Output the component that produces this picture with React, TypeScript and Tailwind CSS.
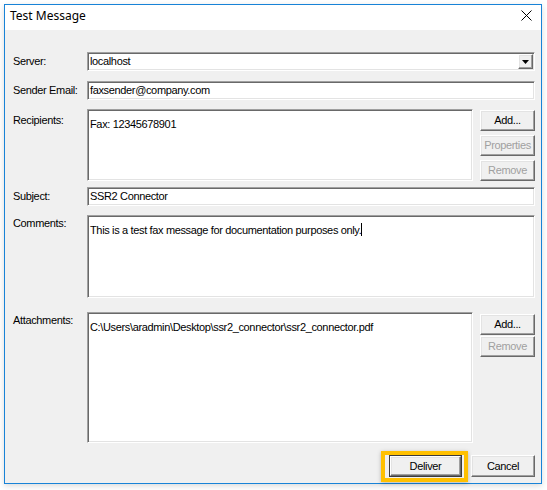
import React from "react";

const sunken =
  "bg-white border border-t-[#a0a0a0] border-l-[#a0a0a0] border-r-white border-b-white shadow-[inset_1px_1px_0_#696969,inset_-1px_-1px_0_#e3e3e3]";

const raised =
  "bg-[#f0f0f0] border border-t-white border-l-white border-r-[#696969] border-b-[#696969] shadow-[inset_-1px_-1px_0_#a0a0a0,inset_1px_1px_0_#e3e3e3]";

const txt = "text-[11px] tracking-[-0.35px]";

const Btn: React.FC<{ label: string; disabled?: boolean; className?: string }> = ({
  label,
  disabled,
  className = "",
}) => (
  <div
    className={`${raised} flex items-center justify-center ${txt} leading-none ${
      disabled ? "text-[#a0a0a0]" : "text-black"
    } ${className}`}
  >
    {label}
  </div>
);

const Label: React.FC<{ text: string; className?: string }> = ({ text, className = "" }) => (
  <div className={`w-[74px] shrink-0 ${txt} text-black ${className}`}>{text}</div>
);

export default function App() {
  return (
    <div
      className="w-[547px] h-[490px] bg-white pt-[4px] pl-[4px]"
      style={{ fontFamily: '"Liberation Sans", Arial, sans-serif' }}
    >
      <div className="w-[538px] h-[480px] border border-[#1883d7] flex flex-col shadow-[0_2px_6px_rgba(0,0,0,0.15)]">
        {/* Title bar */}
        <div className="h-[25px] bg-white flex items-center justify-between pl-[5px] pr-[5px] pb-[4px]">
          <span
            className="text-[12px] text-black"
            style={{ fontFamily: '"Noto Sans", "Open Sans", sans-serif' }}
          >
            Test Message
          </span>
          <svg width="11" height="11" viewBox="0 0 11 11" className="mr-[4px]">
            <path d="M0.5 0.5 L10.5 10.5 M10.5 0.5 L0.5 10.5" stroke="#000" strokeWidth="1" />
          </svg>
        </div>

        {/* Body */}
        <div className="flex-1 bg-[#f0f0f0] pl-[8px] pr-[6px] pt-[22px] flex flex-col">
          {/* Server */}
          <div className="flex items-center h-[19px]">
            <Label text="Server:" />
            <div className={`${sunken} flex-1 h-[19px] flex items-center pl-[2px] pr-[1px]`}>
              <span className={`flex-1 ${txt}`}>localhost</span>
              <div className={`${raised} w-[15px] h-[15px] flex items-center justify-center`}>
                <svg width="7" height="4" viewBox="0 0 7 4">
                  <path d="M0 0 H7 L3.5 4 Z" fill="#000" />
                </svg>
              </div>
            </div>
          </div>

          {/* Sender Email */}
          <div className="flex items-center h-[19px] mt-[10px]">
            <Label text="Sender Email:" />
            <div className={`${sunken} flex-1 h-[19px] flex items-center pl-[2px]`}>
              <span className={txt}>faxsender@company.com</span>
            </div>
          </div>

          {/* Recipients */}
          <div className="flex mt-[9px]">
            <Label text="Recipients:" className="pt-[3px]" />
            <div className={`${sunken} flex-1 h-[72px] pl-[2px] pt-[1px]`}>
              <span className={txt}>Fax: 12345678901</span>
            </div>
            <div className="w-[55px] ml-[7px] flex flex-col gap-[4px] pt-[1px]">
              <Btn label="Add..." className="h-[21px]" />
              <Btn label="Properties" disabled className="h-[21px]" />
              <Btn label="Remove" disabled className="h-[21px]" />
            </div>
          </div>

          {/* Subject */}
          <div className="flex items-center h-[19px] mt-[6px]">
            <Label text="Subject:" />
            <div className={`${sunken} flex-1 h-[19px] flex items-center pl-[2px]`}>
              <span className={txt}>SSR2 Connector</span>
            </div>
          </div>

          {/* Comments */}
          <div className="flex mt-[9px]">
            <Label text="Comments:" className="pt-0" />
            <div className={`${sunken} flex-1 h-[83px] pl-[2px] pt-[1px]`}>
              <span className={txt}>
                This is a test fax message for documentation purposes only.
              </span>
              <span className="inline-block w-px h-[13px] bg-black align-middle" />
            </div>
          </div>

          {/* Attachments */}
          <div className="flex mt-[14px]">
            <Label text="Attachments:" className="pt-0" />
            <div className={`${sunken} flex-1 h-[131px] pl-[2px] pt-[1px]`}>
              <span className={txt}>
                C:\Users\aradmin\Desktop\ssr2_connector\ssr2_connector.pdf
              </span>
            </div>
            <div className="w-[55px] ml-[7px] flex flex-col gap-[1px] pt-[2px]">
              <Btn label="Add..." className="h-[21px]" />
              <Btn label="Remove" disabled className="h-[21px]" />
            </div>
          </div>

          {/* Footer */}
          <div className="flex justify-end mt-[12px] gap-[9px]">
            <div className="relative">
              <div className="absolute -left-[8px] -right-[6px] -top-[4px] -bottom-[5px] border-[4px] border-[#ffc000] shadow-[0_1px_4px_rgba(0,0,0,0.25)]" />
              <div className="w-[73px] h-[22px] border border-[#3c3c3c] flex">
                <Btn label="Deliver" className="flex-1" />
              </div>
            </div>
            <Btn label="Cancel" className="w-[64px] h-[22px]" />
          </div>
        </div>
      </div>
    </div>
  );
}
